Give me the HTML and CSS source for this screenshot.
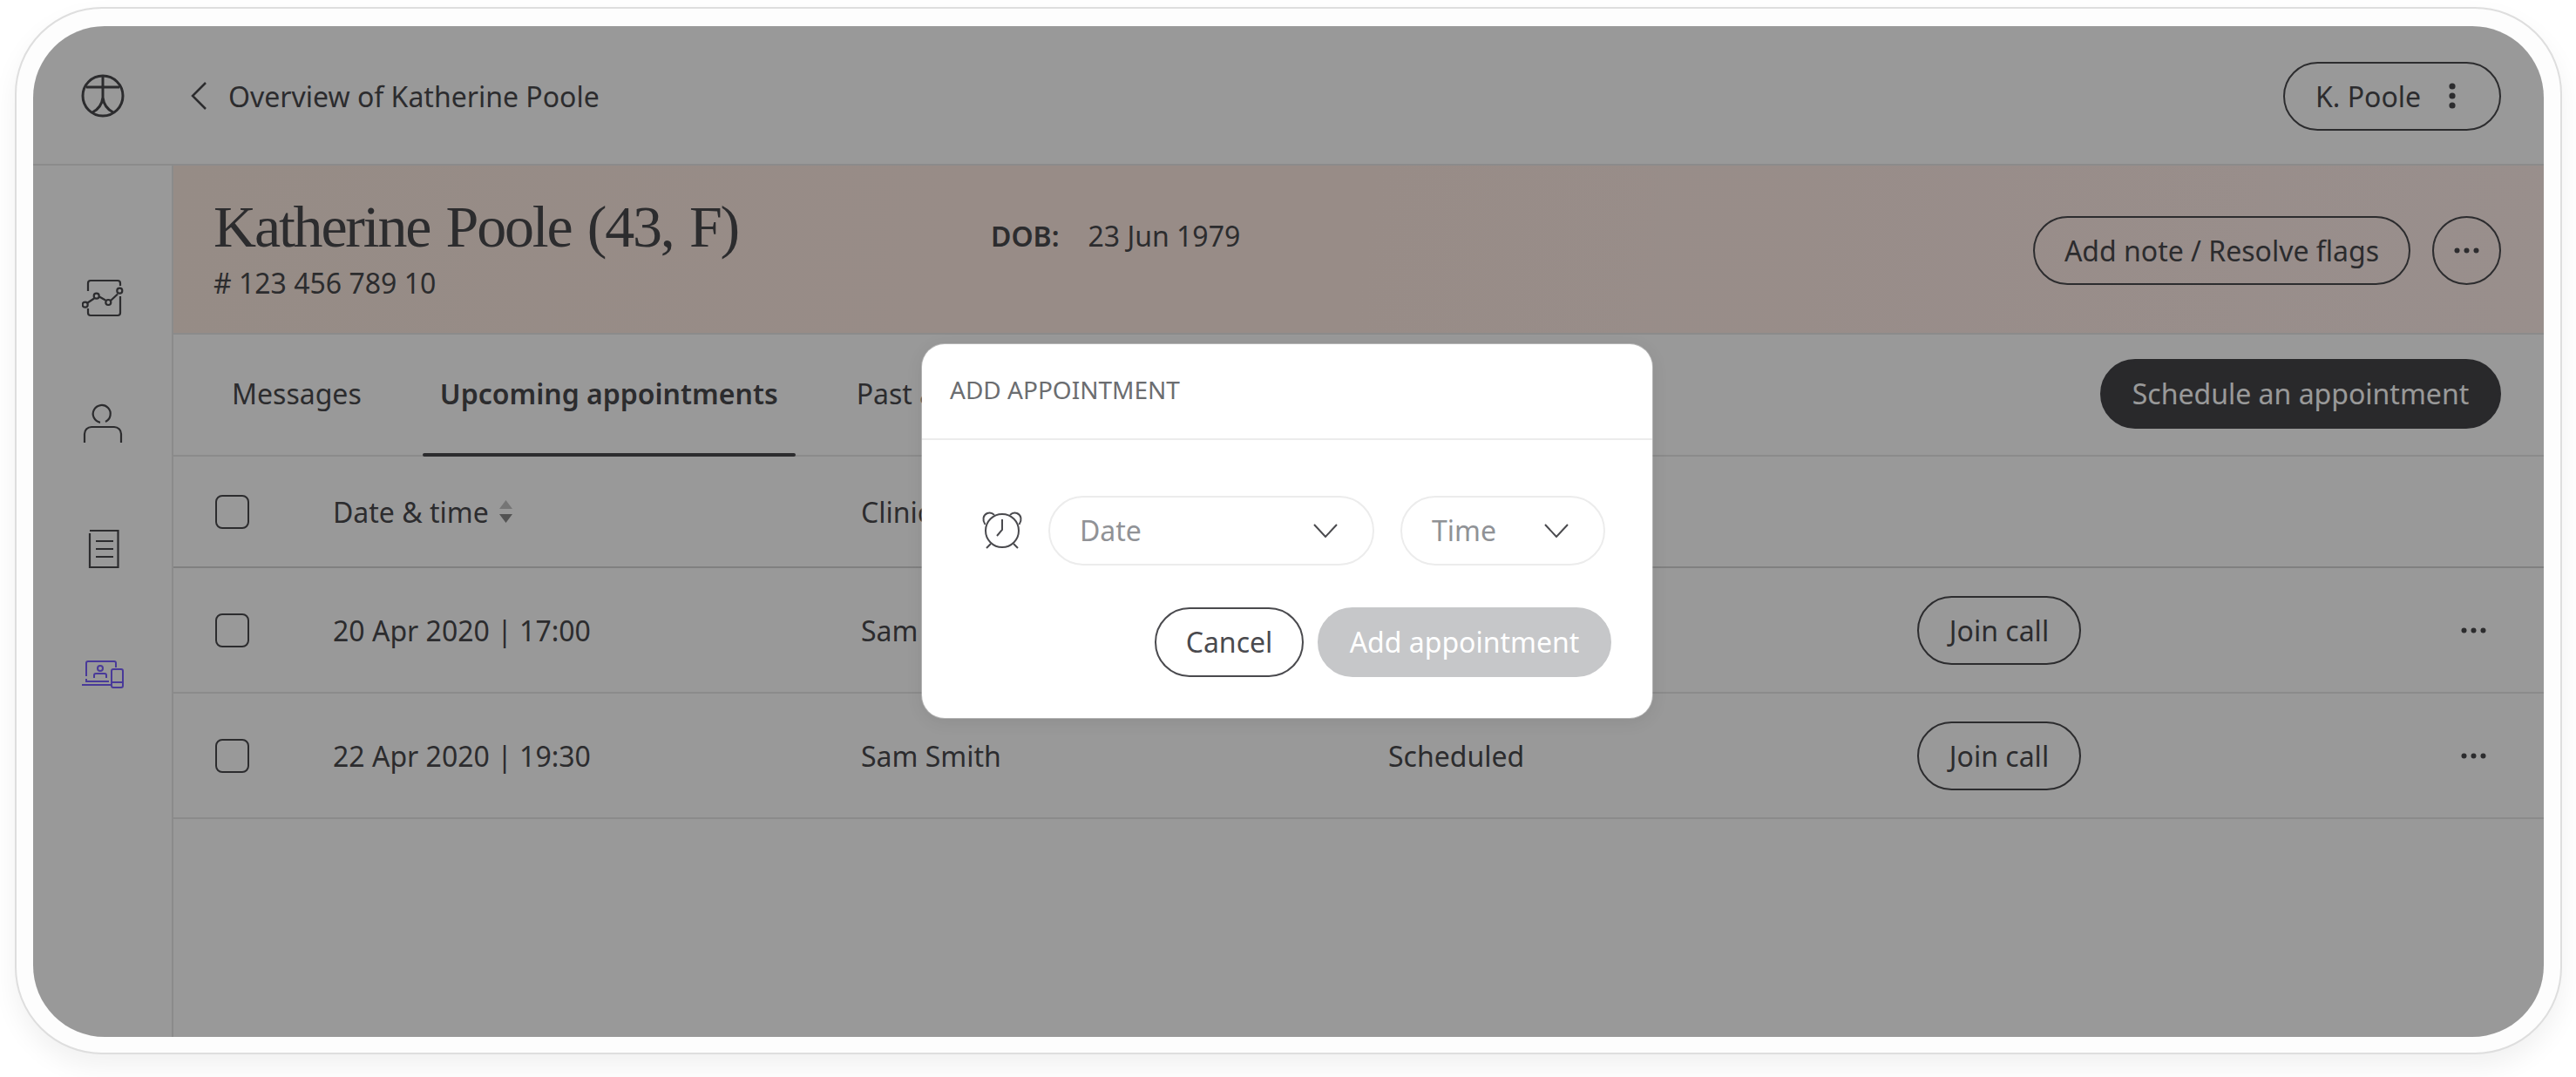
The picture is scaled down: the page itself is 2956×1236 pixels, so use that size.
FILE: index.html
```html
<!DOCTYPE html>
<html lang="en">
<head>
<meta charset="utf-8">
<title>Overview of Katherine Poole</title>
<link rel="stylesheet" href="styles.css">
</head>
<body>
<div class="shell">
  <div class="screen">
    <header class="topbar">
      <div class="logo-cell">
        <svg class="logo" viewBox="0 0 52 52" fill="none" stroke="#4a4a4e" stroke-width="3"><circle cx="26" cy="26" r="23"/><path d="M7 16H45M26 3V30M26 28C25 36 20 42 14 45M26 28C27 36 32 42 38 45"/></svg>
      </div>
      <svg class="back" viewBox="0 0 20 32" fill="none" stroke="#4a4a4e" stroke-width="2.5"><path d="M18 1 3 16 18 31"/></svg>
      <span class="crumb">Overview of Katherine Poole</span>
      <button class="pill user">K. Poole
        <svg class="kebab" viewBox="0 0 8 30" fill="#4a4a4e"><circle cx="4" cy="4" r="3.6"/><circle cx="4" cy="15" r="3.6"/><circle cx="4" cy="26" r="3.6"/></svg>
      </button>
    </header>
    <div class="body">
      <nav class="sidebar">
        <svg class="nav" viewBox="0 0 48 48" fill="none" stroke="#4a4a4e" stroke-width="2.2"><path d="M7 16V7a3 3 0 0 1 3-3h31a3 3 0 0 1 3 3v3M44 22V41a3 3 0 0 1-3 3H10a3 3 0 0 1-3-3v-5"/><path d="M6.500 29.500 14 24.500M20 22.500 27 26.500M33 27 41 19.500"/><circle cx="3.700" cy="31.700" r="3"/><circle cx="16.700" cy="21.700" r="3"/><circle cx="30.300" cy="29" r="3"/><circle cx="43.300" cy="15.700" r="3"/></svg>
        <svg class="nav" viewBox="0 0 48 48" fill="none" stroke="#4a4a4e" stroke-width="2.2"><path d="M21 22.800A10 10 0 1 1 27 22"/><path d="M3 46V36a8 8 0 0 1 8-8H37a8 8 0 0 1 8 8V46"/></svg>
        <svg class="nav" viewBox="0 0 48 48" fill="none" stroke="#4a4a4e" stroke-width="2.2"><path d="M9 3H41.500V45H9V6"/><path d="M16 15H36M16 24H36M16 33H36"/></svg>
        <svg class="nav" viewBox="0 0 48 48" fill="none" stroke="#7b61ff" stroke-width="2"><path d="M5 26V11a2 2 0 0 1 2-2H37a2 2 0 0 1 2 2v5M5 29V32H31M0 36H33"/><rect x="34" y="18" width="13" height="21" rx="2"/><path d="M34 33H47"/><circle cx="21" cy="17" r="3"/><path d="M14 28V25a2 2 0 0 1 2-2H26a2 2 0 0 1 2 2v3"/></svg>
      </nav>
      <main class="main">
        <section class="banner">
          <div class="identity">
            <h1 class="name">Katherine Poole (43, F)</h1>
            <div class="ref"># 123 456 789 10</div>
          </div>
          <div class="dob"><b>DOB:</b><span>23 Jun 1979</span></div>
          <div class="banner-actions">
            <button class="pill note">Add note / Resolve flags</button>
            <button class="pill round"><svg class="dots" viewBox="0 0 29 7" fill="#4a4a4e"><circle cx="3.500" cy="3.500" r="3"/><circle cx="14.500" cy="3.500" r="3"/><circle cx="25.500" cy="3.500" r="3"/></svg></button>
          </div>
        </section>
        <div class="tabs">
          <a class="tab">Messages</a>
          <a class="tab active">Upcoming appointments</a>
          <a class="tab">Past appointments</a>
          <button class="pill solid">Schedule an appointment</button>
        </div>
        <div class="row head">
          <span class="check"></span>
          <span class="sort">Date &amp; time
            <svg class="sort-icon" viewBox="0 0 15 26"><path d="M7.500 0 15 10H0Z" fill="#c4c4c4"/><path d="M7.500 26 0 16H15Z" fill="#8a8a8a"/></svg>
          </span>
          <span>Clinician</span>
          <span>Status</span>
          <span></span>
          <span></span>
        </div>
        <div class="row">
          <span class="check"></span>
          <span>20 Apr 2020 | 17:00</span>
          <span>Sam Smith</span>
          <span>Scheduled</span>
          <span><button class="pill join">Join call</button></span>
          <svg class="dots" viewBox="0 0 29 7" fill="#4a4a4e"><circle cx="3.500" cy="3.500" r="3"/><circle cx="14.500" cy="3.500" r="3"/><circle cx="25.500" cy="3.500" r="3"/></svg>
        </div>
        <div class="row">
          <span class="check"></span>
          <span>22 Apr 2020 | 19:30</span>
          <span>Sam Smith</span>
          <span>Scheduled</span>
          <span><button class="pill join">Join call</button></span>
          <svg class="dots" viewBox="0 0 29 7" fill="#4a4a4e"><circle cx="3.500" cy="3.500" r="3"/><circle cx="14.500" cy="3.500" r="3"/><circle cx="25.500" cy="3.500" r="3"/></svg>
        </div>
      </main>
    </div>
    <div class="overlay">
      <div class="modal">
        <div class="modal-title">ADD APPOINTMENT</div>
        <div class="modal-body">
          <div class="fields">
            <svg class="clock" viewBox="0 0 48 48" fill="none" stroke="#4a4a4e" stroke-width="2"><circle cx="24" cy="24" r="19"/><path d="M24 11V23L18 30M11 39 6 44M37 39 42 44"/><path d="M4.500 17C1 12 2 6 7 4c3-1 6 0 8 2M43.500 17C47 12 46 6 41 4c-3-1-6 0-8 2"/></svg>
            <div class="select date">Date<svg class="chev" viewBox="0 0 28 16" fill="none" stroke="#4a4a4e" stroke-width="2"><path d="M1 1 14 15 27 1"/></svg></div>
            <div class="select time">Time<svg class="chev" viewBox="0 0 28 16" fill="none" stroke="#4a4a4e" stroke-width="2"><path d="M1 1 14 15 27 1"/></svg></div>
          </div>
          <div class="actions">
            <button class="pill cancel">Cancel</button>
            <button class="pill submit">Add appointment</button>
          </div>
        </div>
      </div>
    </div>
  </div>
</div>
</body>
</html>
```

FILE: styles.css
```css
* { box-sizing: border-box; }
html, body { margin: 0; height: 100%; background: #fff; }
body {
  padding: 8px 16px 26px 17px;
  font-family: "Noto Sans", sans-serif;
  font-size: 32px;
  color: #4a4a4e;
}
.shell {
  height: 100%;
  padding: 20px 19px 18px 19px;
  background: #fdfdfd;
  border: 2px solid #dedede;
  border-radius: 100px;
  box-shadow: 0 14px 30px rgba(0, 0, 0, .06);
}
.screen {
  position: relative;
  height: 100%;
  overflow: hidden;
  background: #fff;
  border-radius: 82px;
}
.topbar {
  display: flex;
  align-items: center;
  height: 160px;
  padding: 2px 49px 0 0;
  border-bottom: 2px solid #e8e8e8;
}
.logo-cell { display: flex; justify-content: center; width: 160px; }
.logo { width: 52px; height: 52px; }
.back { width: 20px; height: 32px; margin-left: 20px; }
.crumb { margin-left: 24px; }
.pill {
  display: inline-flex;
  align-items: center;
  justify-content: center;
  height: 79px;
  padding: 0 36px;
  background: transparent;
  border: 2px solid #4a4a4e;
  border-radius: 40px;
  color: #4a4a4e;
  font: inherit;
  white-space: nowrap;
}
.user { margin-left: auto; width: 250px; justify-content: flex-start; padding-left: 35px; }
.kebab { width: 8px; height: 30px; margin-left: 32px; }
.body { display: flex; height: calc(100% - 160px); }
.sidebar {
  display: flex;
  flex-direction: column;
  align-items: center;
  gap: 96px;
  flex: none;
  width: 161px;
  padding-top: 128px;
  border-right: 2px solid #e8e8e8;
}
.nav { width: 48px; height: 48px; flex: none; }
.main { flex: 1; min-width: 0; }
.banner {
  display: flex;
  align-items: center;
  height: 194px;
  padding: 0 49px 0 46px;
  background: linear-gradient(100deg, #fbeae0, #feeae2 50%, #ffeeea);
  border-bottom: 2px solid #e8e8e8;
}
.identity { width: 892px; margin-bottom: 4px; }
.name {
  margin: 0;
  font-family: "Liberation Serif", serif;
  font-size: 68px;
  font-weight: 400;
  letter-spacing: -2.2px;
  word-spacing: 3.5px;
  line-height: 76px;
}
.ref { margin-top: 6px; line-height: 42px; }
.dob { display: flex; gap: 33px; margin-bottom: 32px; }
.dob b { font-weight: 600; }
.banner-actions { display: flex; gap: 25px; margin-left: auto; margin-top: 2px; }
.note { width: 433px; padding: 0; }
.round { width: 79px; padding: 0; }
.dots { width: 29px; height: 7px; }
.tabs {
  display: flex;
  align-items: center;
  gap: 50px;
  height: 140px;
  padding: 0 49px 0 47px;
  border-bottom: 2px solid #e8e8e8;
}
.tab {
  position: relative;
  display: flex;
  align-items: center;
  height: 100%;
  padding: 0 20px 4px;
}
.tab.active { font-weight: 600; }
.tab.active::after {
  content: "";
  position: absolute;
  left: 0;
  right: 0;
  bottom: -2px;
  height: 4px;
  border-radius: 2px;
  background: #4a4a4e;
}
.solid {
  margin-left: auto;
  margin-bottom: 3px;
  width: 460px;
  height: 80px;
  background: #454549;
  border-color: #454549;
  color: #fff;
}
.row {
  display: grid;
  grid-template-columns: 135px 606px 605px 607px 624px 29px;
  align-items: center;
  height: 144px;
  padding-left: 48px;
  border-bottom: 2px solid #e8e8e8;
}
.row.head { height: 128px; border-bottom-color: #d5d5d5; }
.check {
  width: 39px;
  height: 39px;
  border: 2px solid #4a4a4e;
  border-radius: 8px;
}
.sort { display: flex; align-items: center; gap: 12px; }
.sort-icon { width: 15px; height: 26px; }
.join { width: 188px; padding: 0; }
.overlay {
  position: absolute;
  inset: 0;
  display: flex;
  align-items: center;
  justify-content: center;
  padding: 0 3px 2px 0;
  background: rgba(0, 0, 0, .4);
}
.modal {
  width: 838px;
  height: 429px;
  background: #fff;
  border-radius: 26px;
  box-shadow: 0 0 0 1px rgba(255, 255, 255, .3), 0 4px 20px rgba(0, 0, 0, .08);
}
.modal-title {
  display: flex;
  align-items: center;
  height: 110px;
  padding: 0 32px 4px;
  border-bottom: 2px solid #ececec;
  color: #6b6d70;
  font-size: 28px;
}
.modal-body { padding: 64px 47px 0 68px; }
.fields { display: flex; align-items: center; gap: 29px; }
.clock { width: 48px; height: 48px; flex: none; }
.select {
  display: flex;
  align-items: center;
  justify-content: space-between;
  height: 80px;
  padding: 0 40px 0 34px;
  border: 2px solid #ececec;
  border-radius: 40px;
  color: #909296;
}
.select.date { width: 374px; }
.select.time { width: 235px; margin-left: 1px; }
.chev { width: 28px; height: 16px; }
.actions { display: flex; justify-content: flex-end; gap: 16px; margin-top: 48px; }
.cancel { width: 171px; height: 80px; padding: 0; }
.submit {
  width: 337px;
  height: 80px;
  padding: 0;
  background: #c6c7c9;
  border-color: #c6c7c9;
  color: #fff;
}
```
